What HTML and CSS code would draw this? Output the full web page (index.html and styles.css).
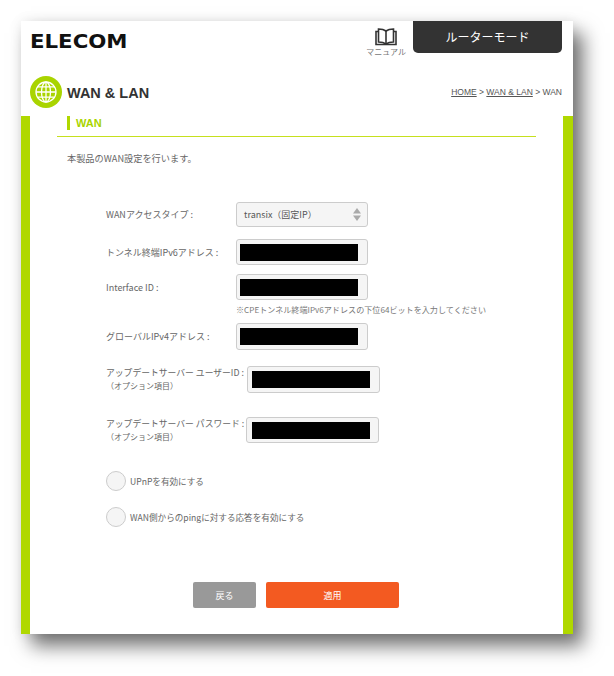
FILE: index.html
```html
<!DOCTYPE html>
<html lang="ja">
<head>
  <meta charset="UTF-8">
  <title>WAN &amp; LAN</title>
  <link rel="stylesheet" href="styles.css">
</head>
<body>

<div class="panel">
  <header class="topbar">
    <div class="logo">ELECOM</div>
    <div class="top-right">
      <a class="manual">
        <svg width="22" height="18" viewBox="0 0 22 18" fill="none" stroke="#333" stroke-width="1.6">
          <path d="M11 3C9 1.5 6.5 1 3.5 1V14C6.5 14 9 14.5 11 16C13 14.5 15.5 14 18.500 14V1C15.500 1 13 1.500 11 3Z"/>
          <path d="M11 3V16"/>
          <path d="M3.500 3.500H1V16.500H21V3.500H18.500"/>
        </svg>
        <span>マニュアル</span>
      </a>
      <div class="mode">ルーターモード</div>
    </div>
  </header>

  <div class="titlebar">
    <div class="title">
      <span class="globe">
        <svg width="22" height="22" viewBox="0 0 22 22" fill="none" stroke="#fff" stroke-width="1.300">
          <circle cx="11" cy="11" r="10"/>
          <ellipse cx="11" cy="11" rx="4.500" ry="10"/>
          <path d="M11 1V21M1 11H21M2.500 5.800H19.500M2.500 16.200H19.500"/>
        </svg>
      </span>
      <h1>WAN &amp; LAN</h1>
    </div>
    <div class="crumbs"><a>HOME</a> &gt; <a>WAN &amp; LAN</a> &gt; WAN</div>
  </div>

  <main class="content">
    <h2 class="section-head"><span>WAN</span></h2>
    <p class="intro">本製品のWAN設定を行います。</p>

    <form class="wan-form">
      <div class="row">
        <label>WANアクセスタイプ :</label>
        <div class="field select">
          <span>transix（固定IP）</span>
          <svg width="8" height="13" viewBox="0 0 8 13" fill="#aaa"><path d="M4 0L8 5.500H0Z"/><path d="M4 13L0 7.500H8Z"/></svg>
        </div>
      </div>
      <div class="row row-2">
        <label>トンネル終端IPv6アドレス :</label>
        <div class="field"><i class="mask"></i></div>
      </div>
      <div class="row row-3">
        <label>Interface ID :</label>
        <div class="field"><i class="mask"></i></div>
      </div>
      <p class="hint">※CPEトンネル終端IPv6アドレスの下位64ビットを入力してください</p>
      <div class="row row-4">
        <label>グローバルIPv4アドレス :</label>
        <div class="field tall"><i class="mask"></i></div>
      </div>
      <div class="row row-5">
        <label>アップデートサーバー ユーザーID :<small>（オプション項目）</small></label>
        <div class="field tall"><i class="mask"></i></div>
      </div>
      <div class="row row-6">
        <label>アップデートサーバー パスワード :<small>（オプション項目）</small></label>
        <div class="field"><i class="mask"></i></div>
      </div>
      <div class="check check-1"><i class="radio"></i>UPnPを有効にする</div>
      <div class="check check-2"><i class="radio"></i>WAN側からのpingに対する応答を有効にする</div>
      <div class="buttons">
        <button type="button" class="back">戻る</button>
        <button type="button" class="apply">適用</button>
      </div>
    </form>
  </main>
</div>

</body>
</html>
```

FILE: styles.css
```css
* {
  margin: 0;
  padding: 0;
  box-sizing: border-box;
}
html, body {
  height: 100%;
}
body {
  font-family: "Noto Sans CJK JP", "Noto Sans", sans-serif;
  background: #fff;
  color: #666;
  padding: 21px 0 0 21px;
}
.panel {
  width: 552px;
  height: 613px;
  background: #fff;
  display: flex;
  flex-direction: column;
  box-shadow: 10px 12px 18px rgba(0, 0, 0, 0.55), 0 0 12px rgba(0, 0, 0, 0.08);
}
.topbar {
  flex: none;
  display: flex;
  justify-content: space-between;
  height: 55px;
  padding: 0 11px 0 9px;
}
.logo {
  font-family: "DejaVu Sans", sans-serif;
  font-weight: bold;
  font-size: 19px;
  line-height: 14px;
  margin-top: 13px;
  color: #111;
  transform: scaleX(1.12);
  transform-origin: left;
}
.top-right {
  display: flex;
  align-items: flex-start;
}
.manual {
  display: flex;
  flex-direction: column;
  align-items: center;
  margin: 7px 7px 0 0;
  color: #777;
  font-size: 8px;
  line-height: 12px;
}
.mode {
  width: 149px;
  height: 32px;
  background: #333;
  color: #fff;
  font-size: 12px;
  line-height: 32px;
  text-align: center;
  border-radius: 0 0 5px 5px;
}
.titlebar {
  flex: none;
  display: flex;
  justify-content: space-between;
  align-items: center;
  height: 40px;
  padding: 0 11px 8px 9px;
}
.title {
  display: flex;
  align-items: center;
  gap: 5px;
}
.globe {
  width: 32px;
  height: 32px;
  border-radius: 50%;
  background: #a9d400;
  display: flex;
  align-items: center;
  justify-content: center;
}
.title h1 {
  font-family: "Liberation Sans", Arial, sans-serif;
  font-size: 14.500px;
  color: #333;
  margin-top: 1px;
}
.crumbs {
  font-family: "Liberation Sans", Arial, sans-serif;
  font-size: 8.500px;
  color: #555;
}
.crumbs a {
  text-decoration: underline;
}
.content {
  flex: 1;
  border-left: 9px solid #b0d800;
  border-right: 10px solid #b0d800;
  padding: 0 27px;
}
.section-head {
  height: 21px;
  border-bottom: 1px solid #c6e01e;
  padding-left: 10px;
}
.section-head span {
  display: block;
  height: 14px;
  border-left: 3px solid #b0d800;
  padding-left: 6px;
  font-family: "Liberation Sans", Arial, sans-serif;
  font-size: 11px;
  line-height: 14px;
  color: #a9d400;
}
.intro {
  font-size: 9.200px;
  line-height: 14px;
  margin: 14px 0 0 10px;
}
.wan-form {
  padding-left: 49px;
  font-size: 9px;
}
.row {
  display: flex;
  align-items: center;
  margin-top: 37px;
}
.row label {
  width: 130px;
  flex: none;
  white-space: nowrap;
}
.row small {
  display: block;
  font-size: 8px;
  line-height: 14px;
}
.field {
  width: 132px;
  height: 26px;
  background: #f5f5f5;
  border: 1px solid #ccc;
  border-radius: 3px;
  display: flex;
  align-items: center;
  padding-left: 3px;
}
.field.tall {
  height: 27px;
}
.mask {
  display: block;
  width: 118px;
  height: 17px;
  background: #000;
}
.select {
  height: 25px;
  justify-content: space-between;
  padding: 0 6px 0 7px;
  color: #555;
}
.row-2 {
  margin-top: 12px;
}
.row-3 {
  margin-top: 9px;
}
.hint {
  margin: 3px 0 0 130px;
  font-size: 8.100px;
  line-height: 14px;
  color: #777;
  white-space: nowrap;
}
.row-4 {
  margin-top: 6px;
}
.row-5 {
  margin-top: 16px;
  align-items: flex-start;
}
.row-5 label {
  width: 141px;
  font-size: 8.800px;
}
.row-5 .field {
  width: 133px;
  padding-left: 4px;
}
.row-6 {
  margin-top: 24px;
  align-items: flex-start;
}
.row-6 label {
  width: 140px;
  font-size: 8.800px;
}
.row-6 .field {
  width: 133px;
  padding-left: 5px;
}
.check {
  display: flex;
  align-items: center;
  gap: 4px;
  font-size: 8.600px;
}
.check-1 {
  margin-top: 27px;
}
.check-2 {
  margin-top: 16px;
}
.radio {
  width: 20px;
  height: 20px;
  border-radius: 50%;
  background: #f5f5f5;
  border: 1px solid #ccc;
}
.buttons {
  display: flex;
  gap: 10px;
  margin: 55px 0 0 87px;
}
.buttons button {
  height: 26px;
  border: none;
  border-radius: 2px;
  color: #fff;
  font-family: inherit;
  font-size: 9px;
}
.back {
  width: 63px;
  background: #999;
}
.apply {
  width: 133px;
  background: #f35a21;
}
```
